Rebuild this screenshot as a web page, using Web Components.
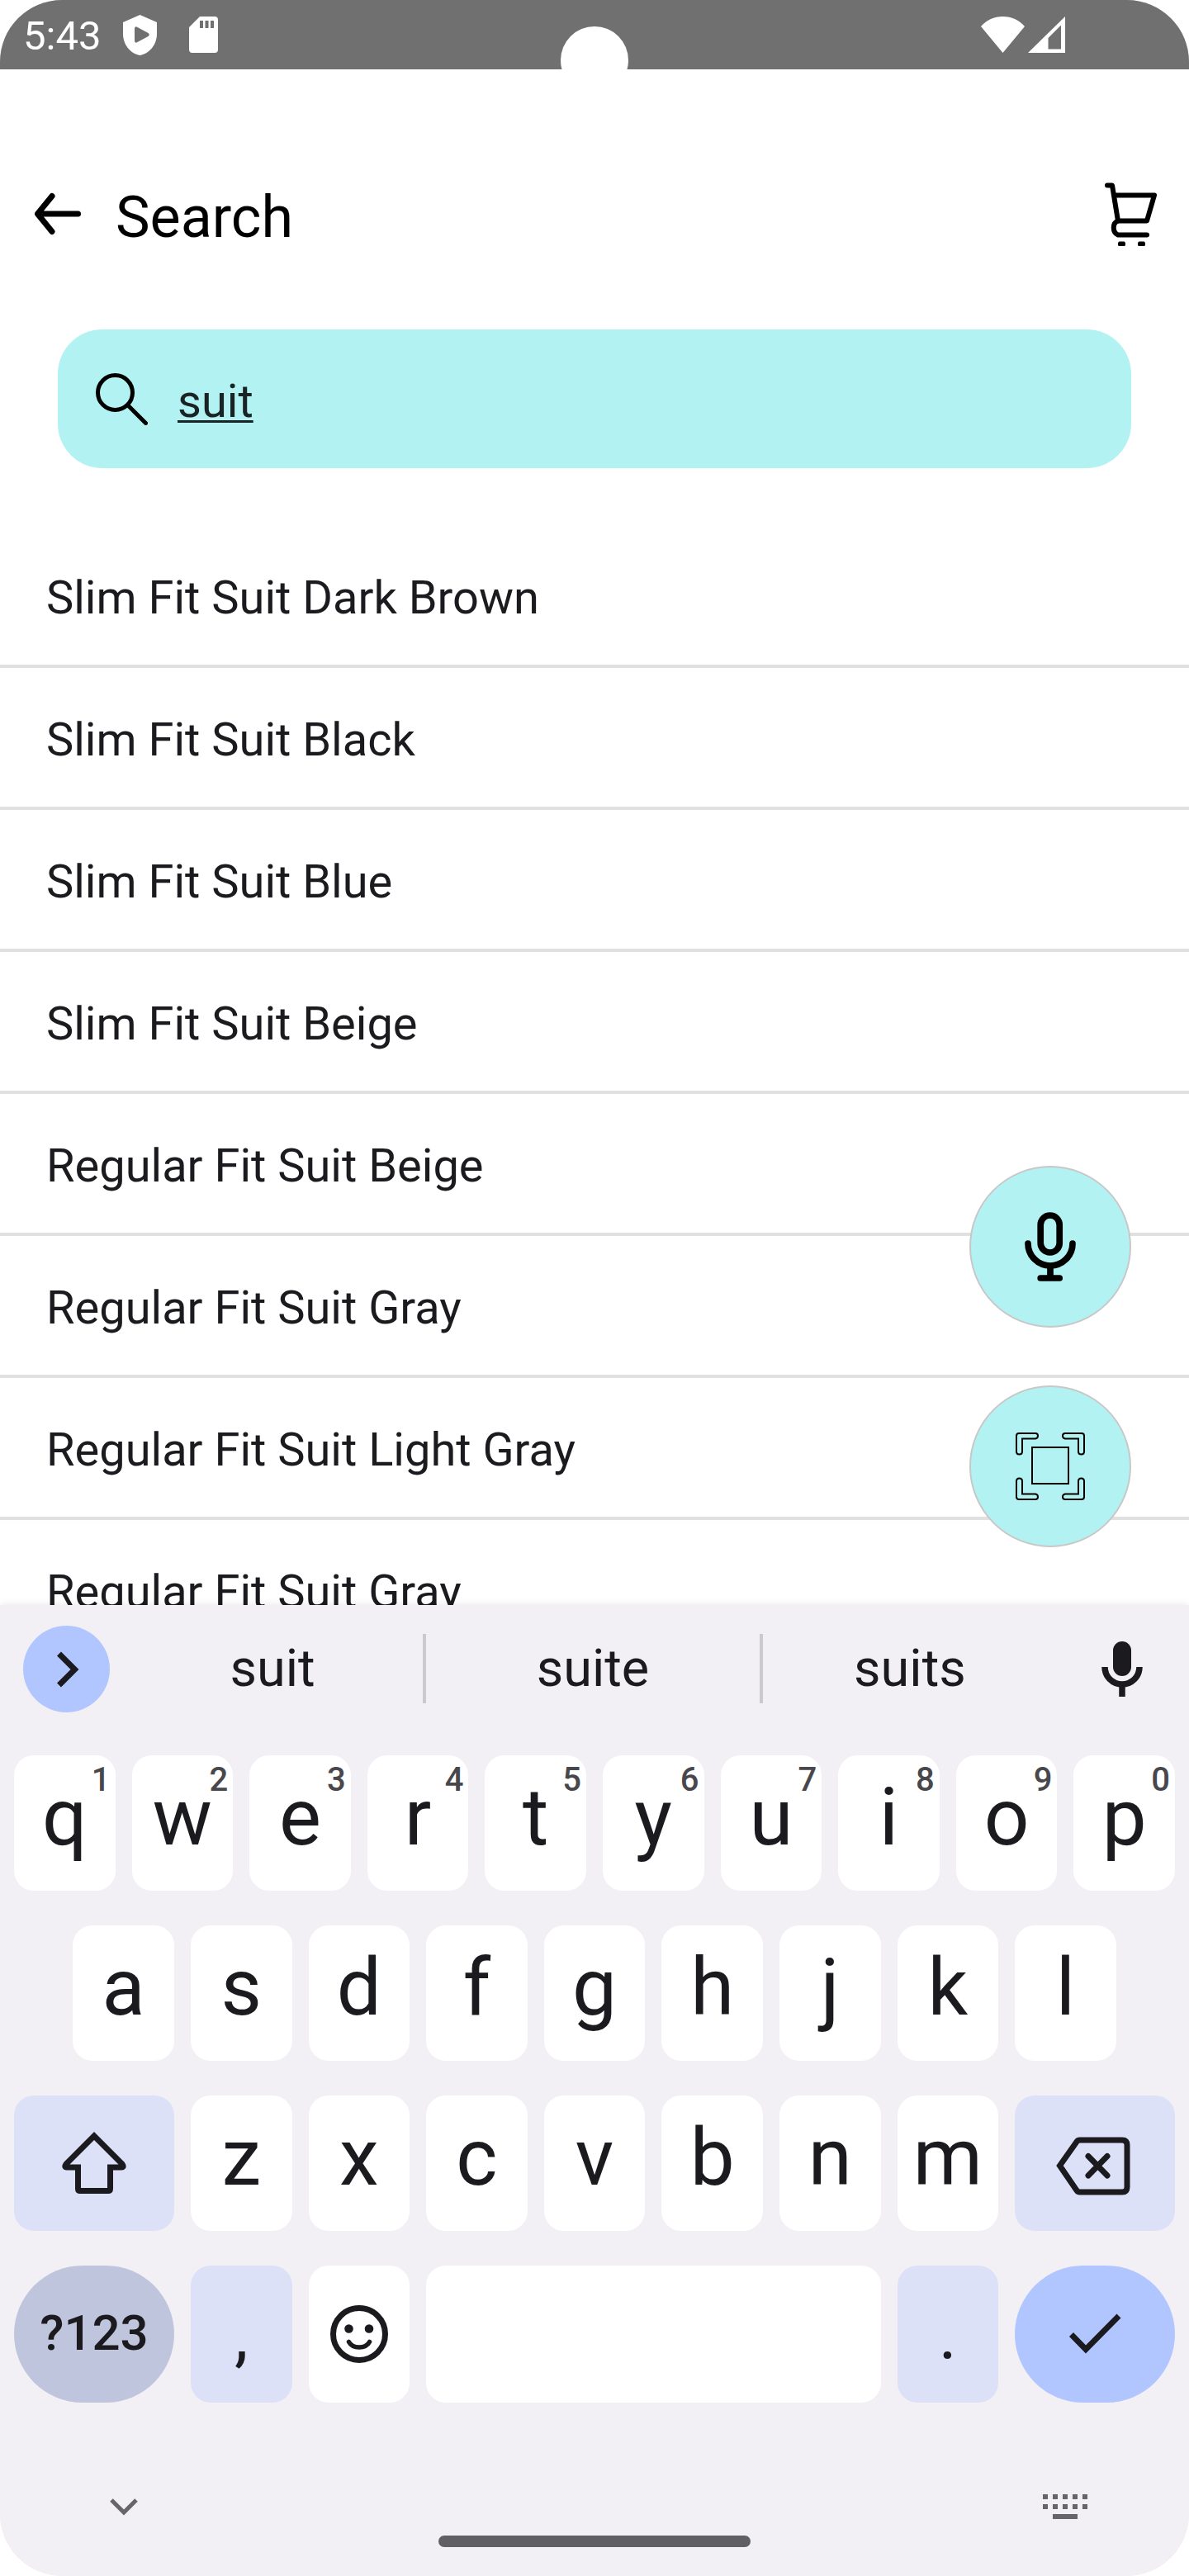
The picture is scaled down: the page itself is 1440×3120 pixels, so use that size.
<!DOCTYPE html>
<html lang="en">
<head>
<meta charset="utf-8">
<meta name="viewport" content="width=device-width, initial-scale=1">
<title>Search</title>
<style>
  html, body { margin: 0; background: #fff; }
  body {
    --ink: #1b1b1f;
    --aqua: #b3f2f2;
    --line: #e0e0e0;
    --board: #f2f0f5;
    --accent: #b1c5ff;
    --tint: #dde1f8;
    font-family: Roboto, "Liberation Sans", sans-serif;
    color: var(--ink);
  }
</style>
</head>
<body>
<phone-screen>
  <status-bar slot="status" time="5:43"></status-bar>
  <app-header>Search</app-header>
  <search-field value="suit"></search-field>
  <result-list>
    <result-row>Slim Fit Suit Dark Brown</result-row>
    <result-row>Slim Fit Suit Black</result-row>
    <result-row>Slim Fit Suit Blue</result-row>
    <result-row>Slim Fit Suit Beige</result-row>
    <result-row>Regular Fit Suit Beige</result-row>
    <result-row>Regular Fit Suit Gray</result-row>
    <result-row>Regular Fit Suit Light Gray</result-row>
    <result-row>Regular Fit Suit Gray</result-row>
    <round-action slot="actions" icon="mic" label="Voice search"></round-action>
    <round-action slot="actions" icon="scan" label="Scan"></round-action>
  </result-list>
  <soft-keyboard slot="keyboard"></soft-keyboard>
</phone-screen>

<script>
const define = (name, html, setup) => {
  const template = document.createElement('template');
  template.innerHTML = '<style>:host{box-sizing:border-box}*{box-sizing:border-box}' +
    'button{margin:0;padding:0;border:0;background:none;color:inherit;font:inherit;cursor:pointer}' +
    'svg{display:block}</style>' + html;
  customElements.define(name, class extends HTMLElement {
    constructor() {
      super();
      this.attachShadow({ mode: 'open' }).append(template.content.cloneNode(true));
    }
    connectedCallback() { if (setup) setup(this, this.shadowRoot); }
  });
};

/* name: [width, height, markup] */
const ICONS = {
  shield: [41, 49, '<path fill="currentColor" fill-rule="evenodd" d="M20.500 0L41 9V23C41 36 32 47 20.500 49C9 47 0 36 0 23V9ZM14 17V31Q14 35 17.500 33L30.500 26Q33 24 30.500 22L17.500 15Q14 13 14 17Z"/>'],
  sd: [35, 44, '<path fill="currentColor" fill-rule="evenodd" d="M13 0H31Q35 0 35 4V40Q35 44 31 44H4Q0 44 0 40V13ZM13 5V14H17V5ZM19.500 5V14H23.500V5ZM26 5V14H30V5Z"/>'],
  wifi: [53, 44, '<path fill="currentColor" d="M26.500 44L0 12C7 4 16 0 26.500 0S46 4 53 12Z"/>'],
  signal: [45, 44, '<path fill="currentColor" fill-rule="evenodd" d="M0 44L45 0V44ZM24.500 26V39.500H40V10.500Z"/>'],
  back: [56, 56, '<path fill="none" stroke="currentColor" stroke-width="7" stroke-linecap="round" stroke-linejoin="round" d="M52.500 28H4M21 6.500L3.500 28L21 49.500"/>'],
  cart: [63, 77, '<g fill="none" stroke="currentColor" stroke-width="6" stroke-linecap="round" stroke-linejoin="round"><path d="M3 3.500H9L16 46.500H51L60 15.500H11"/><path d="M16 46.500C9 49 9 60 16 63.500H51"/></g><path fill="currentColor" d="M18 71.500h5q2 0 2 3t-2 3h-5q-2 0-2-3t2-3zM42 71.500h5q2 0 2 3t-2 3h-5q-2 0-2-3t2-3z"/>'],
  search: [63, 63, '<g fill="none" stroke="currentColor" stroke-width="5" stroke-linecap="round"><circle cx="23.500" cy="23.500" r="21"/><path d="M39 39L60.500 60.500"/></g>'],
  mic: [84, 84, '<g fill="none" stroke="currentColor" stroke-width="7.700" stroke-linecap="round"><rect x="30.200" y="4" width="23" height="45" rx="11.500"/><path d="M15 38A27 27 0 0 0 69 38M42 65V80M30.200 80H53.200"/></g>'],
  scan: [84, 84, '<g fill="none" stroke="currentColor" stroke-width="2"><rect x="20" y="19" width="44" height="44"/>' +
    ['', 'translate(84 0) scale(-1 1)', 'translate(0 84) scale(1 -1)', 'translate(84 84) scale(-1 -1)'].map(t =>
      `<path transform="${t}" d="M4 2H24Q27 2 27 5T24 8.500H8V24Q8 27.500 4.500 27.500T1 24V5Q1 2 4 2Z"/>`).join('') + '</g>'],
  more: [105, 105, '<path fill="none" stroke="currentColor" stroke-width="7" d="M43.500 34L62.500 53L43.500 72"/>'],
  dictate: [50, 67, '<rect x="14" width="22" height="42" rx="11" fill="currentColor"/><path fill="none" stroke="currentColor" stroke-width="7.500" d="M4 31A21 21 0 0 0 46 31M25 52V67"/>'],
  shift: [84, 84, '<path fill="none" stroke="currentColor" stroke-width="7" d="M42 9L76 43Q79 47 75 47H61.500V73Q61.500 75.500 59 75.500H25Q22.500 75.500 22.500 73V47H9Q5 47 8 43Z"/>'],
  erase: [96, 84, '<g fill="none" stroke="currentColor" stroke-width="7"><path d="M5.500 45L26 16Q27 14 30 14H81Q87 14 87 20V71Q87 77 81 77H30Q27 77 26 75Z"/><path stroke-linecap="round" d="M40 33.500L63 57M63 33.500L40 57"/></g>'],
  smile: [84, 84, '<circle cx="42" cy="42" r="31.500" fill="none" stroke="currentColor" stroke-width="7"/><circle cx="29.500" cy="35.500" r="5.300" fill="currentColor"/><circle cx="54" cy="35.500" r="5.300" fill="currentColor"/><path fill="none" stroke="currentColor" stroke-width="5.500" stroke-linecap="round" d="M29.500 51.500Q33 58 42 58T54.500 51.500"/>'],
  check: [84, 84, '<path fill="none" stroke="currentColor" stroke-width="7" d="M13.500 42.500L31 60.500L71 20"/>'],
  down: [34, 21, '<path fill="none" stroke="currentColor" stroke-width="5" d="M2 2L17 17L32 2"/>'],
  board: [54, 30, '<path fill="currentColor" d="' +
    [0, 12].map(y => [0, 12, 24, 36, 48].map(x => `M${x} ${y}h6v6h-6z`).join('')).join('') + 'M12 24h30v6h-30z"/>'],
};

define('app-icon', '<style>:host{display:block;flex:none}</style>', (el, root) => {
  const [w, h, body] = ICONS[el.getAttribute('name')];
  const svg = document.createElement('template');
  svg.innerHTML = `<svg width="${w}" height="${h}" viewBox="0 0 ${w} ${h}" aria-hidden="true">${body}</svg>`;
  root.append(svg.content);
});

define('phone-screen', `
<style>
  :host { display: flex; flex-direction: column; height: 100vh; overflow: hidden; border-radius: 75px; background: #fff; }
  main { flex: 1; min-height: 0; display: flex; flex-direction: column; }
</style>
<slot name="status"></slot>
<main><slot></slot></main>
<slot name="keyboard"></slot>`);

define('status-bar', `
<style>
  :host { display: flex; align-items: center; position: relative; flex: none; height: 84px; padding: 0 150px 0 28px; overflow: hidden; background: #707070; color: #fff; }
  time { padding-top: 4px; font-size: 49px; line-height: 56px; }
  .left { display: flex; align-items: center; gap: 39px; margin-left: 27px; }
  .right { display: flex; gap: 4px; margin-left: auto; }
  .camera { position: absolute; top: 32px; left: calc(50% - 41px); width: 82px; height: 82px; border-radius: 50%; background: #fff; }
</style>
<time></time>
<div class="left"><app-icon name="shield"></app-icon><app-icon name="sd"></app-icon></div>
<div class="right"><app-icon name="wifi"></app-icon><app-icon name="signal"></app-icon></div>
<div class="camera"></div>`, (el, root) => {
  root.querySelector('time').textContent = el.getAttribute('time');
});

define('app-header', `
<style>
  :host { display: flex; align-items: center; gap: 42px; flex: none; height: 196px; margin-top: 77px; padding: 0 39px 0 42px; color: #000; }
  h1 { margin: 0; padding-top: 8px; font-size: 70px; line-height: 82px; font-weight: 400; }
  .cart { margin-left: auto; }
</style>
<button aria-label="Back"><app-icon name="back"></app-icon></button>
<h1><slot></slot></h1>
<button class="cart" aria-label="Cart"><app-icon name="cart"></app-icon></button>`);

define('search-field', `
<style>
  :host { display: flex; align-items: center; gap: 36px; flex: none; height: 168px; margin: 42px 70px 70px; padding: 0 46px; border-radius: 54px; background: var(--aqua); }
  label { color: #000; }
  input { flex: 1; min-width: 0; margin: 0; padding: 6px 0 0; border: 0; outline: 0; background: none; font: inherit; font-size: 56px; line-height: 66px; color: #1a2425;
    text-decoration: underline; text-decoration-thickness: 3px; text-underline-offset: 4px; text-decoration-skip-ink: none; }
</style>
<label for="query" aria-label="Search"><app-icon name="search"></app-icon></label>
<input id="query" type="text" aria-label="Search" autocomplete="off" spellcheck="false">`, (el, root) => {
  root.querySelector('input').value = el.getAttribute('value');
});

define('result-list', `
<style>
  :host { display: block; position: relative; flex: 1; min-height: 0; }
  .rows { height: 100%; overflow: hidden; }
  .actions { position: absolute; right: 70px; bottom: 70px; display: flex; flex-direction: column; gap: 70px; }
</style>
<div class="rows" role="list"><slot></slot></div>
<div class="actions"><slot name="actions"></slot></div>`);

define('result-row', `
<style>
  :host { display: block; border-bottom: 4px solid var(--line); }
  button { display: block; width: 100%; padding: 54px 56px 48px; font-size: 56px; line-height: 66px; text-align: left; }
</style>
<button><slot></slot></button>`, el => el.setAttribute('role', 'listitem'));

define('round-action', `
<style>
  :host { display: block; }
  button { display: grid; place-items: center; width: 196px; height: 196px; border: 2px solid #c8c8c8; border-radius: 50%; background: var(--aqua); color: #000; }
</style>
<button></button>`, (el, root) => {
  const button = root.querySelector('button');
  button.setAttribute('aria-label', el.getAttribute('label'));
  button.innerHTML = `<app-icon name="${el.getAttribute('icon')}"></app-icon>`;
});

define('suggestion-strip', `
<style>
  :host { display: flex; align-items: center; height: 154px; padding: 0 56px 0 28px; }
  .more { border-radius: 50%; background: var(--accent); }
  .words { flex: 1; display: flex; align-items: center; margin: 0 54px 0 15px; }
  .words button { flex: 359 1 0; height: 84px; font-size: 63px; line-height: 74px; }
  .words button:first-child { flex-grow: 367; }
  .words button:nth-child(2) { flex-grow: 407; border: solid #cbc9cf; border-width: 0 4px; }
</style>
<button class="more" aria-label="More"><app-icon name="more"></app-icon></button>
<div class="words"><button>suit</button><button>suite</button><button>suits</button></div>
<button aria-label="Dictate"><app-icon name="dictate"></app-icon></button>`);

define('key-cap', `
<style>
  :host { display: block; position: relative; grid-column: span 2; margin: 0 10px; }
  :host([span="3"]) { grid-column: span 3; }
  :host([span="8"]) { grid-column: span 8; }
  :host([inset]) { grid-column: 2 / span 2; }
  :host([first]) { grid-column: 1 / span 3; }
  button { display: flex; justify-content: center; align-items: center; width: 100%; height: 164px; padding: 0 0 14px; border-radius: 24px; background: #fff; font-size: 96px; line-height: 112px; }
  :host([icon]) button { padding: 0; }
  :host([tone]) button { background: var(--tint); }
  :host([tone="mode"]) button { border-radius: 83px; background: #c0c5de; padding: 0 0 2px; font-size: 60px; line-height: 70px; font-weight: 500; }
  :host([tone="enter"]) button { border-radius: 83px; background: var(--accent); }
  :host([tone="mark"]) button { padding: 4px 0 0; font-size: 84px; }
  :host([tall]) button { height: 166px; }
  small { position: absolute; top: 10px; right: 6px; font-size: 40px; line-height: 40px; font-weight: 500; color: #48474c; pointer-events: none; }
  small:empty { display: none; }
</style>
<button><slot></slot></button><small></small>`, (el, root) => {
  const button = root.querySelector('button');
  if (el.hasAttribute('label')) button.setAttribute('aria-label', el.getAttribute('label'));
  if (el.hasAttribute('icon')) button.innerHTML = `<app-icon name="${el.getAttribute('icon')}"></app-icon>`;
  root.querySelector('small').textContent = el.getAttribute('hint') || '';
});

const letters = (text, hints = '') => [...text].map((c, i) =>
  `<key-cap${hints ? ` hint="${hints[i]}"` : ''}>${c}</key-cap>`).join('');

define('soft-keyboard', `
<style>
  :host { display: block; position: relative; flex: none; background: var(--board); box-shadow: 0 0 10px rgba(0,0,0,.1); }
  .keys { display: grid; grid-template-columns: repeat(20, minmax(0, 1fr)); row-gap: 42px; padding: 28px 7px 0; }
</style>
<suggestion-strip></suggestion-strip>
<div class="keys">
  ${letters('qwertyuiop', '1234567890')}
  <key-cap inset>a</key-cap>${letters('sdfghjkl')}
  <key-cap first tone="tint" icon="shift" label="Shift"></key-cap>
  ${letters('zxcvbnm')}
  <key-cap span="3" tone="tint" icon="erase" label="Delete"></key-cap>
  <key-cap first tone="mode" tall>?123</key-cap>
  <key-cap tone="mark" tall>,</key-cap>
  <key-cap icon="smile" label="Emoji" tall></key-cap>
  <key-cap span="8" label="Space" tall></key-cap>
  <key-cap tone="mark" tall>.</key-cap>
  <key-cap span="3" tone="enter" icon="check" label="Done" tall></key-cap>
</div>
<nav-bar></nav-bar>`);

define('nav-bar', `
<style>
  :host { display: flex; flex-direction: column; gap: 20px; padding: 111px 120px 35px; color: #66656a; }
  .row { display: flex; justify-content: space-between; }
  button { display: grid; place-items: center; width: 60px; height: 30px; }
  .pill { align-self: center; width: 378px; height: 14px; border-radius: 7px; background: #606062; }
</style>
<div class="row">
  <button aria-label="Hide keyboard"><app-icon name="down"></app-icon></button>
  <button aria-label="Switch keyboard"><app-icon name="board"></app-icon></button>
</div>
<div class="pill"></div>`);
</script>
</body>
</html>
